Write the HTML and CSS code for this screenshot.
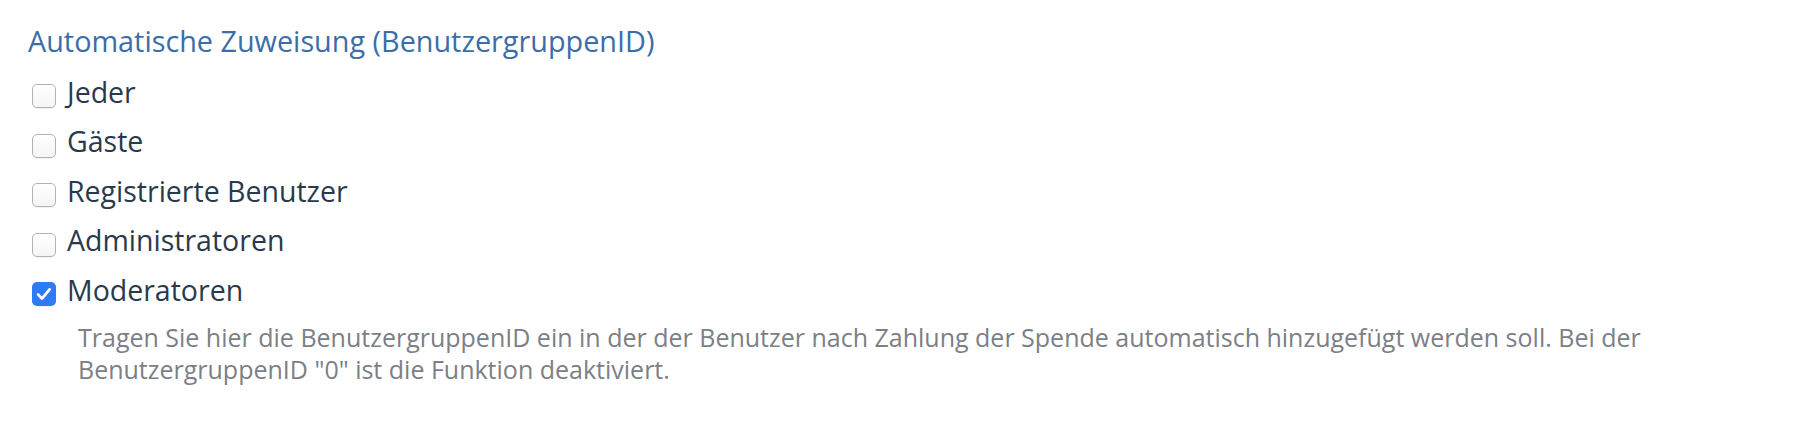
FILE: index.html
```html
<!DOCTYPE html>
<html lang="de">
<head>
<meta charset="utf-8">
<title>Automatische Zuweisung</title>
<link rel="stylesheet" href="styles.css">
</head>
<body>
<section class="field">
  <h2 class="field-title">Automatische Zuweisung (BenutzergruppenID)</h2>
  <div class="options">
    <label class="option"><span class="box"></span><span class="label">Jeder</span></label>
    <label class="option"><span class="box"></span><span class="label">Gäste</span></label>
    <label class="option"><span class="box"></span><span class="label">Registrierte Benutzer</span></label>
    <label class="option"><span class="box"></span><span class="label">Administratoren</span></label>
    <label class="option"><span class="box box-checked"><svg viewBox="0 0 24 24" class="check"><path d="M6.2 12.6 L10 16.6 L17.6 7.4" fill="none" stroke="#fff" stroke-width="2.8" stroke-linecap="round" stroke-linejoin="round"/></svg></span><span class="label">Moderatoren</span></label>
  </div>
  <p class="field-desc">Tragen Sie hier die BenutzergruppenID ein in der der Benutzer nach Zahlung der Spende automatisch hinzugefügt werden soll. Bei der BenutzergruppenID "0" ist die Funktion deaktiviert.</p>
</section>
</body>
</html>
```
FILE: styles.css
```css
html, body {
  margin: 0;
  padding: 0;
  background: #ffffff;
}

body {
  font-family: "Open Sans", "Noto Sans", sans-serif;
}

.field {
  padding: 23.5px 0 0 28px;
}

.field-title {
  margin: 0 0 18.8px 0;
  font-size: 28.8px;
  line-height: 34.6px;
  font-weight: 400;
  color: #3b6da9;
}

.options {
  display: flex;
  flex-direction: column;
  gap: 19.5px;
}

.option {
  display: flex;
  align-items: flex-start;
  height: 30px;
}

.box {
  box-sizing: border-box;
  width: 24px;
  height: 24px;
  margin: 7.5px 11px 0 4px;
  border: 1.5px solid #b3b3b3;
  border-radius: 5px;
  background: linear-gradient(#ffffff, #f5f5f5);
  box-shadow: 0 1px 1px rgba(0, 0, 0, 0.06);
  flex: none;
  display: flex;
}

.box-checked {
  border: none;
  background: #2f7bf5;
}

.check {
  width: 24px;
  height: 24px;
}

.label {
  font-size: 28.5px;
  line-height: 30px;
  color: #2a3a4c;
}

.field-desc {
  margin: 16.5px 0 0 0;
  padding: 0 120px 0 50px;
  font-size: 25px;
  line-height: 32px;
  color: #7b8086;
}
```
